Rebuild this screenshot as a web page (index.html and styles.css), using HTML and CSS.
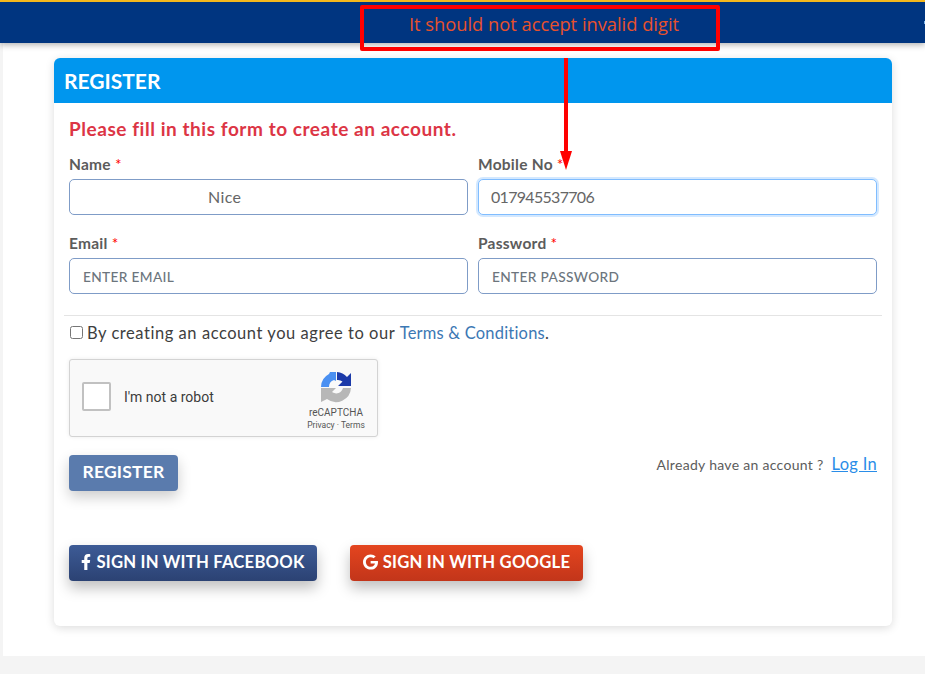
FILE: index.html
```html
<!DOCTYPE html>
<html lang="en">
<head>
  <meta charset="UTF-8" />
  <meta name="viewport" content="width=device-width, initial-scale=1.0"/>
  <title>Register</title>
  <link rel="stylesheet" href="styles.css">
</head>
<body>
  <div class="topbar"><span class="topbar-glyph"></span></div>

  <div class="page">
    <div class="card">
      <div class="card-head">REGISTER</div>
      <div class="card-body">
        <h4 class="intro">Please fill in this form to create an account.</h4>

        <div class="form-row">
          <div class="form-group">
            <label>Name <span class="req">*</span></label>
            <input type="text" class="field field-name" value="Nice" />
          </div>
          <div class="form-group">
            <label>Mobile No <span class="req">*</span></label>
            <input type="text" class="field field-focus" value="017945537706" />
          </div>
        </div>

        <div class="form-row">
          <div class="form-group">
            <label>Email <span class="req">*</span></label>
            <input type="email" class="field" placeholder="ENTER EMAIL" />
          </div>
          <div class="form-group">
            <label>Password <span class="req">*</span></label>
            <input type="password" class="field" placeholder="ENTER PASSWORD" />
          </div>
        </div>

        <hr class="divider" />

        <div class="agree">
          <input type="checkbox" class="agree-box" />
          <span>By creating an account you agree to our <a href="#" class="terms">Terms &amp; Conditions</a>.</span>
        </div>

        <div class="captcha">
          <span class="captcha-box"></span>
          <span class="captcha-label">I'm not a robot</span>
          <div class="captcha-brand">
            <svg class="captcha-logo" viewBox="0 0 32 32" width="32" height="32">
              <path d="M1 16 A15 15 0 0 1 9 3 L10 1 L16 1 L16 10 L14 9 A7.5 7.5 0 0 0 9 16 Z" fill="#4a90f2"/>
              <path d="M17 1 A15 15 0 0 1 27 6 L31 2 L31 15 L18 15 L22.5 10.5 A7.5 7.5 0 0 0 17 9 Z" fill="#1c3aa9"/>
              <path d="M1 17 L16 17 L12 21 A7 7 0 0 0 23 17 L31 17 A15 15 0 0 1 7 28 L1 31 Z" fill="#b7b7b7"/>
            </svg>
            <div class="captcha-name">reCAPTCHA</div>
            <div class="captcha-links">Privacy &middot; Terms</div>
          </div>
        </div>

        <div class="submit-row">
          <button class="btn btn-register">REGISTER</button>
          <div class="login-hint">Already have an account ? <a href="#" class="login-link">Log In</a></div>
        </div>

        <div class="social-row">
          <button class="btn btn-social btn-facebook">
            <svg viewBox="0 0 320 512" width="10" height="16"><path fill="#fff" d="M279.14 288l14.22-92.66h-88.91v-60.13c0-25.35 12.42-50.06 52.24-50.06h40.42V6.26S260.43 0 225.36 0c-73.22 0-121.08 44.38-121.08 124.72v70.62H22.89V288h81.39v224h100.17V288z"/></svg>
            SIGN IN WITH FACEBOOK
          </button>
          <button class="btn btn-social btn-google">
            <svg viewBox="0 0 488 512" width="15" height="16"><path fill="#fff" d="M488 261.8C488 403.3 391.1 504 248 504 110.8 504 0 393.2 0 256S110.8 8 248 8c66.8 0 123 24.5 166.3 64.9l-67.5 64.9C258.5 52.6 94.3 116.6 94.3 256c0 86.5 69.1 156.6 153.7 156.6 98.2 0 135-70.4 140.8-106.9H248v-85.3h236.1c2.3 12.7 3.9 24.9 3.9 41.4z"/></svg>
            SIGN IN WITH GOOGLE
          </button>
        </div>
      </div>
    </div>
  </div>

  <!-- annotation drawn over the screenshot -->
  <div class="note">It should not accept invalid digit</div>
  <div class="note-line"></div>
  <div class="note-head"></div>
</body>
</html>
```

FILE: styles.css
```css
* {
  box-sizing: border-box;
  font-family: 'Lato', 'Open Sans', sans-serif;
}

html, body {
  margin: 0;
  padding: 0;
}

body {
  background: #f4f4f4;
  position: relative;
  height: 674px;
  overflow: hidden;
}

.topbar {
  height: 43px;
  background: #003580;
  border-top: 2px solid #f5b81c;
  box-shadow: 0 2px 6px rgba(0,0,0,0.3);
  display: flex;
  justify-content: flex-end;
  align-items: center;
  position: relative;
}

.topbar-glyph {
  width: 1px;
  height: 3px;
  background: #7fb4e8;
}

.page {
  background: white;
  margin-left: 3px;
  height: 613px;
  padding: 15px 33px 0 51px;
}

.card {
  background: white;
  width: 838px;
  height: 568px;
  border-radius: 6px;
  box-shadow: 0 2px 10px rgba(0,0,0,0.14);
  overflow: hidden;
}

.card-head {
  height: 45px;
  background: #0096ee;
  color: white;
  font-size: 21px;
  font-weight: 700;
  line-height: 45px;
  padding-left: 10px;
}

.card-body {
  padding: 14px 15px 0 15px;
}

.intro {
  margin: 0 0 13px 0;
  color: #dc3545;
  font-size: 19px;
  font-weight: 700;
  line-height: 24px;
  letter-spacing: 0.55px;
}

.form-row {
  display: flex;
  gap: 10px;
  margin-bottom: 18px;
}

.form-group {
  width: 399px;
}

label {
  display: block;
  height: 22px;
  line-height: 20px;
  margin-bottom: 3px;
  font-size: 15.5px;
  font-weight: 700;
  color: #5c5c5c;
  letter-spacing: 0.25px;
}

.req {
  color: #f00;
  font-weight: 400;
}

.field {
  display: block;
  width: 100%;
  height: 36px;
  padding: 0 13px 1px 13px;
  background: white;
  border: 1px solid #7f9cc7;
  border-radius: 5px;
  font-size: 16px;
  color: #666;
  outline: none;
  letter-spacing: 0.35px;
}

.field::placeholder {
  color: #6c757d;
  font-size: 13.7px;
  font-weight: 500;
  opacity: 1;
}

.field-name {
  padding-left: 138px;
}

.field-focus {
  border-color: #80bdff;
  box-shadow: 0 0 0 2px rgba(128,189,255,0.35);
  padding-left: 12px;
  letter-spacing: -0.7px;
}

.divider {
  border: 0;
  border-top: 1px solid #e4e4e4;
  margin: 21px -5px 7px -5px;
}

.agree {
  display: flex;
  align-items: center;
  gap: 4px;
  height: 20px;
  font-size: 16.5px;
  color: #3e3e3e;
  letter-spacing: 0.55px;
}

.agree-box {
  width: 13px;
  height: 13px;
  margin: 0 0 2px 1px;
}

.terms {
  color: #3c78b4;
  text-decoration: none;
  letter-spacing: 0.2px;
}

.captcha {
  width: 309px;
  height: 78px;
  margin-top: 16px;
  background: #f9f9f9;
  border: 1px solid #d3d3d3;
  border-radius: 3px;
  box-shadow: 0 0 4px rgba(0,0,0,0.08);
  display: flex;
  align-items: center;
  font-family: 'Roboto', sans-serif;
}

.captcha-box {
  width: 29px;
  height: 29px;
  margin: 0 0 3px 12px;
  background: white;
  border: 2px solid #c1c1c1;
  border-radius: 2px;
}

.captcha-label {
  margin: 0 0 3px 13px;
  font-family: 'Roboto', sans-serif;
  font-size: 14px;
  color: #3c3c3c;
}

.captcha-brand {
  align-self: flex-start;
  margin: 0 5px 0 auto;
  width: 72px;
  text-align: center;
  padding-top: 11px;
  color: #555;
}

.captcha-logo {
  display: block;
  margin: 0 auto 3px auto;
}

.captcha-name {
  font-family: 'Roboto', sans-serif;
  font-size: 10px;
  line-height: 13px;
}

.captcha-links {
  font-family: 'Roboto', sans-serif;
  font-size: 8.5px;
  line-height: 12px;
}

.submit-row {
  display: flex;
  justify-content: space-between;
  margin-top: 18px;
}

.btn {
  border: none;
  color: white;
  border-radius: 4px;
  font-weight: 700;
  cursor: pointer;
  letter-spacing: 0.2px;
}

.btn-register {
  width: 109px;
  height: 36px;
  padding: 0 0 3px 0;
  background: #5a7bad;
  font-size: 17.5px;
  box-shadow: 0 6px 14px rgba(0,0,0,0.2);
}

.login-hint {
  font-size: 14px;
  color: #5c5c5c;
  margin-top: -1px;
  letter-spacing: 0.3px;
}

.login-link {
  margin-left: 4px;
  font-size: 16.5px;
  color: #2a8de8;
  text-decoration: underline;
}

.social-row {
  display: flex;
  gap: 33px;
  margin-top: 54px;
}

.btn-social {
  height: 36px;
  padding: 0 0 2px 0;
  font-size: 16.7px;
  display: flex;
  align-items: center;
  justify-content: center;
  gap: 5px;
  box-shadow: 0 7px 14px rgba(0,0,0,0.25);
}

.btn-facebook {
  width: 248px;
  background: linear-gradient(#3d5b96, #2b4273);
}

.btn-google {
  width: 233px;
  background: linear-gradient(#e4451f, #c2351a);
}

/* annotation */
.note {
  position: absolute;
  left: 360px;
  top: 5px;
  width: 360px;
  height: 46px;
  padding-left: 8px;
  border: 4px solid #f00;
  border-radius: 2px;
  color: #e8512c;
  font-family: 'Open Sans', sans-serif;
  font-size: 18.3px;
  line-height: 30px;
  text-align: center;
}

.note-line {
  position: absolute;
  left: 564px;
  top: 58px;
  width: 4px;
  height: 95px;
  background: #f00;
}

.note-head {
  position: absolute;
  left: 560px;
  top: 151px;
  width: 0;
  height: 0;
  border-left: 6px solid transparent;
  border-right: 6px solid transparent;
  border-top: 19px solid #f00;
}
```
